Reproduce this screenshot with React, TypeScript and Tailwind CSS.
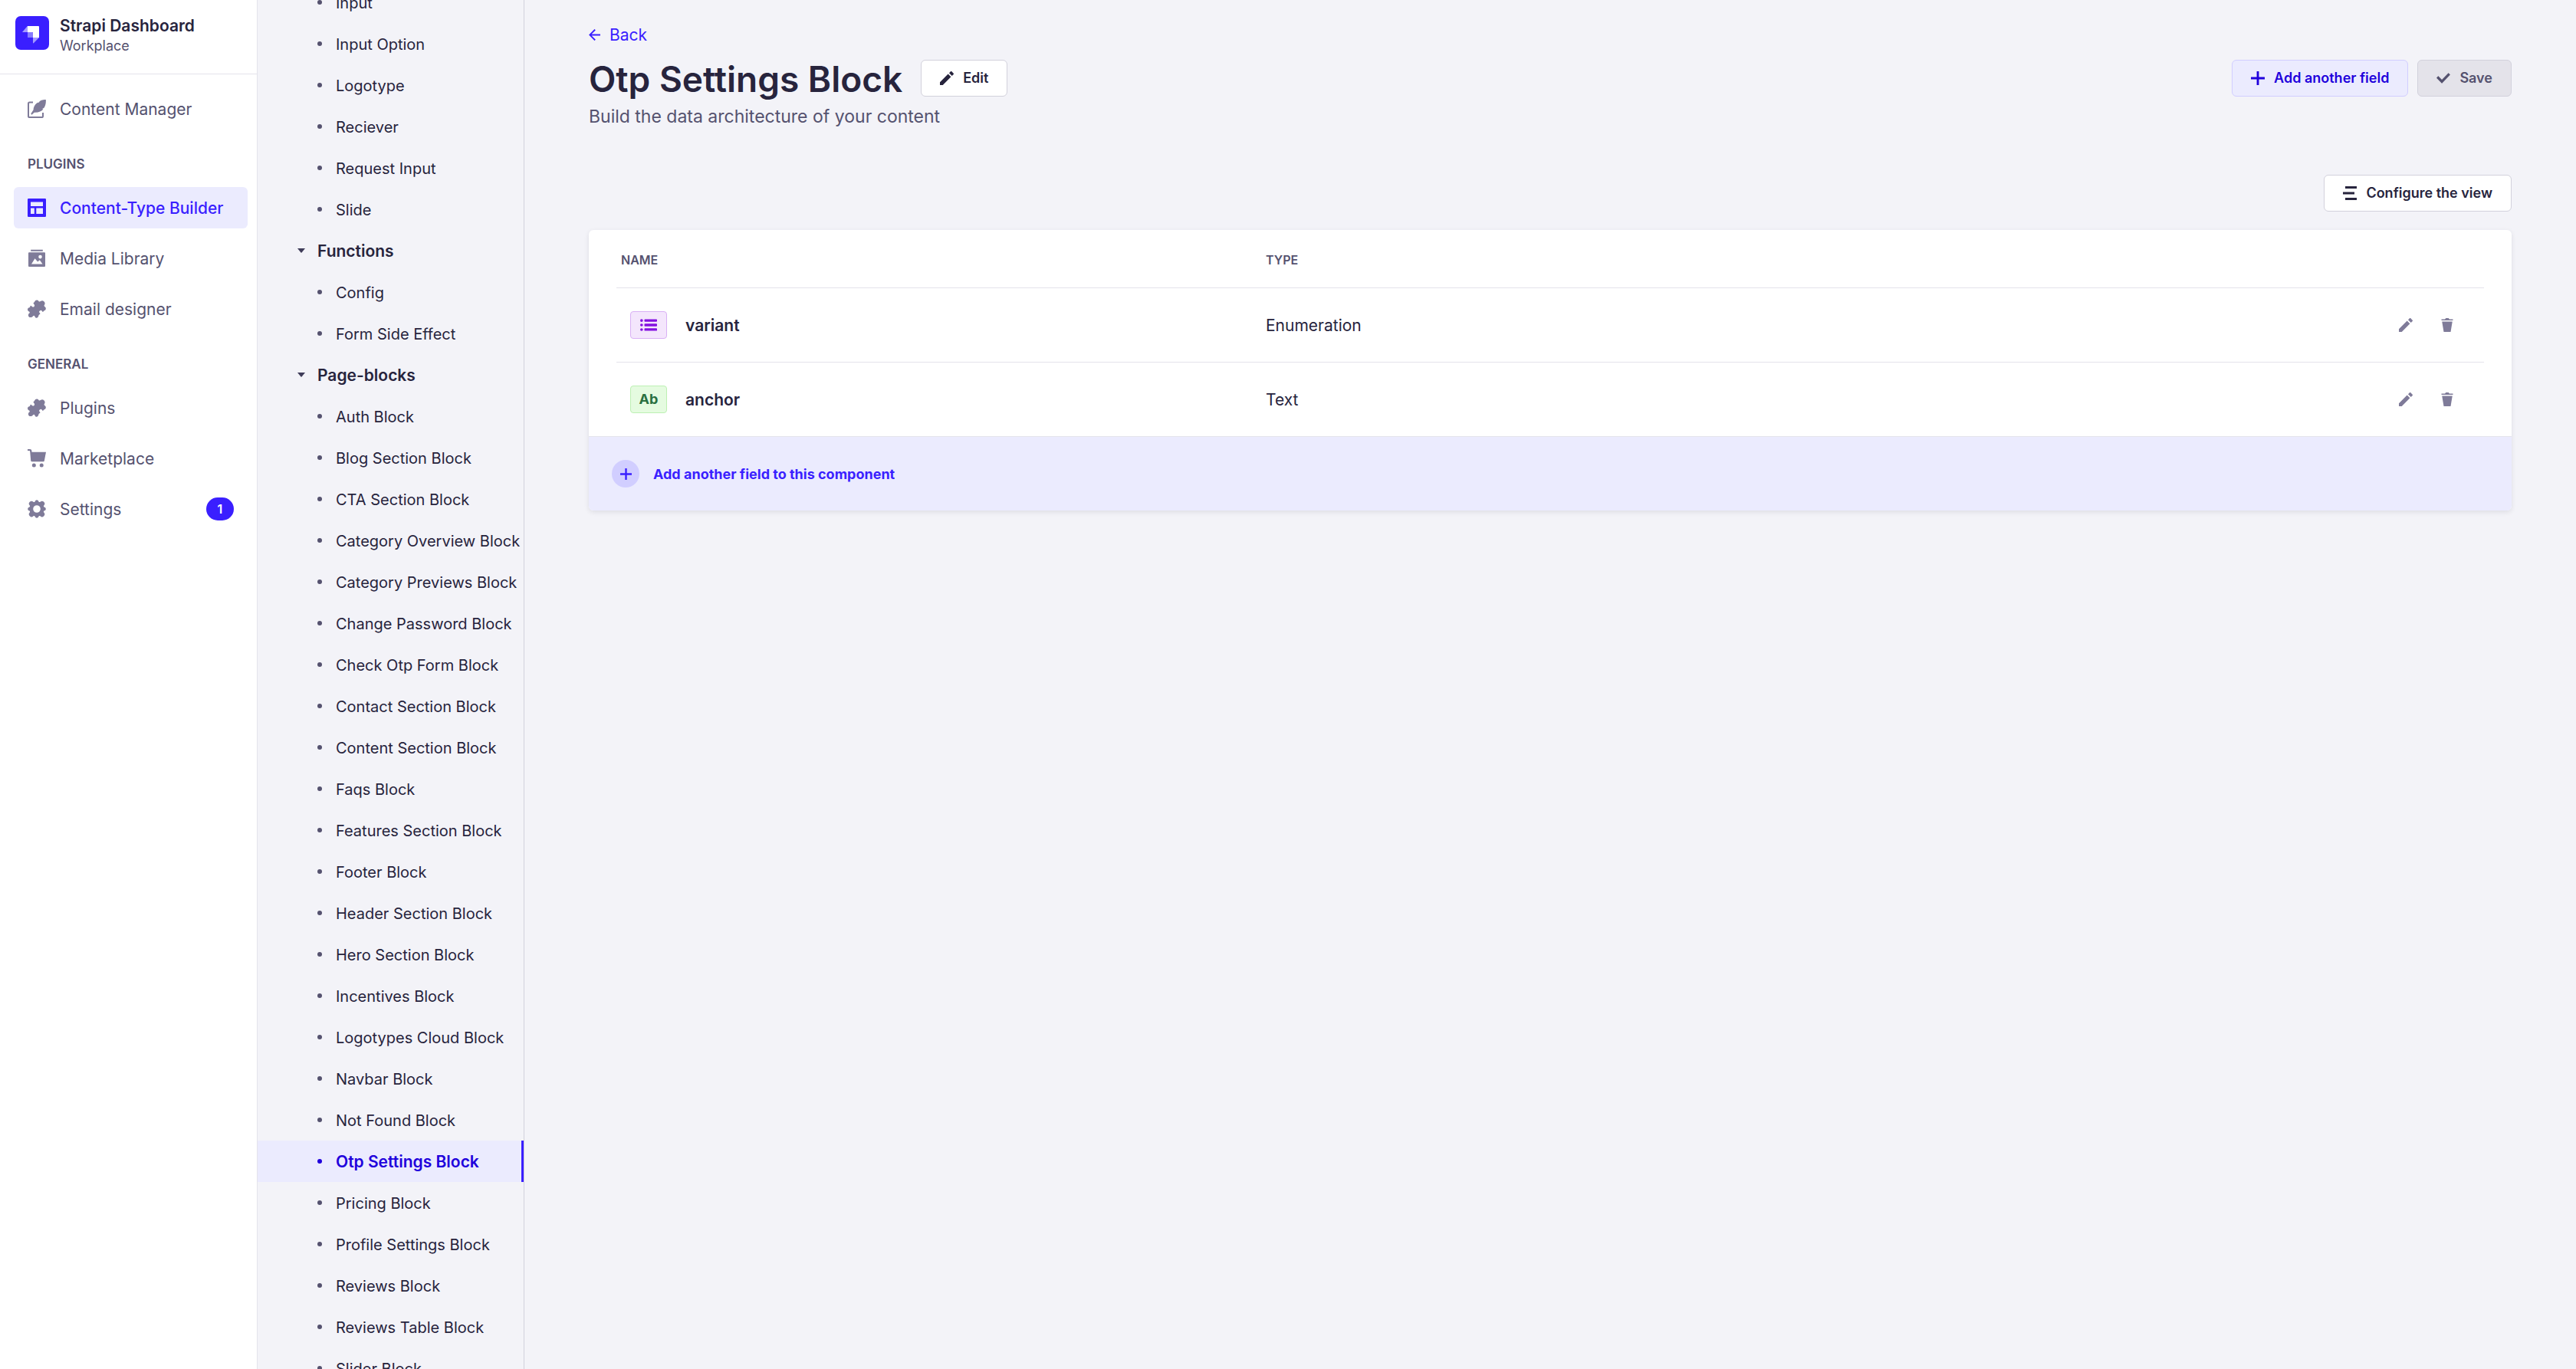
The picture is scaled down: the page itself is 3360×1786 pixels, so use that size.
import React from "react";

type IconProps = { className?: string };

const Svg = ({ className, children, box = "0 0 24 24" }: IconProps & { children: React.ReactNode; box?: string }) => (
  <svg viewBox={box} fill="currentColor" aria-hidden="true" className={className}>
    {children}
  </svg>
);

const Logo = () => (
  <Svg box="0 0 44 44" className="size-[44px] shrink-0">
    <rect width="44" height="44" rx="7" className="fill-[#3a1fff]" />
    <path d="M16 13h14a1 1 0 0 1 1 1v14h-8v-7h-7z" fill="#fff" />
    <path d="M16 13v8H9l6.500-7.700z" className="fill-[#a39aff]" />
    <path d="M16 21h6.500a.5.500 0 0 1 .5.500V28h-6.500a.5.500 0 0 1-.5-.5z" className="fill-[#877bff]" />
    <path d="M23 28h8l-7.200 7.200a.5.500 0 0 1-.8-.3z" className="fill-[#a39aff]" />
  </Svg>
);

const WriteIcon = ({ className }: IconProps) => (
  <Svg className={className}>
    <path d="M7 3.500H2.600A1.600 1.600 0 0 0 1 5.100v16.300A1.600 1.600 0 0 0 2.600 23h15.800a1.600 1.600 0 0 0 1.600-1.600V17" fill="none" stroke="currentColor" strokeWidth="2" />
    <path d="M23.800 0C19 0 16.500.8 14.800 3.500l-1 .6-.6-.4C10.500 5.300 7.600 9 7.600 13.300l-3.400 5.200 1.300 1.300 3.200-3.100c5.800.2 9.600-1.400 11.700-4.200l-1.300-.5 2.300-1.300C23.200 8 24.200 4.400 23.800 0z" />
  </Svg>
);

const LayoutIcon = ({ className }: IconProps) => (
  <Svg className={className}>
    <path fillRule="evenodd" d="M1.200 0h21.600A1.200 1.200 0 0 1 24 1.200v21.600a1.200 1.200 0 0 1-1.200 1.200H1.200A1.200 1.200 0 0 1 0 22.800V1.200A1.200 1.200 0 0 1 1.200 0zM4 4.500V10h16V4.500zM4 12.500V20h4.800v-7.500zm7.300 0V20H20v-7.500z" />
  </Svg>
);

const MediaIcon = ({ className }: IconProps) => (
  <Svg className={className}>
    <path fillRule="evenodd" d="M4.200.800h15.600v2H4.200zM2 4.300h20a1 1 0 0 1 1 1V22a1 1 0 0 1-1 1H2a1 1 0 0 1-1-1V5.300a1 1 0 0 1 1-1zm14.500 3.500a2.300 2.300 0 1 0 0 4.600 2.300 2.300 0 0 0 0-4.600zM5 19.500h14.500l-3.700-5.200-2.600 2.300-3.700-4.300z" />
  </Svg>
);

const PuzzleIcon = ({ className }: IconProps) => (
  <Svg className={className}>
    <path d="M9.300 2.300a2.900 2.900 0 0 1 5.200-.4c.5.900 1.600.8 2.400.2a3.500 3.500 0 0 1 5.100 4.600c-.7 1-.5 1.700.3 2.400a2.800 2.800 0 0 1-.6 5.200c-1 .3-1.200 1.600-1.800 1.600-.9 0-1.300-2.300-3-2-1.700.2-2.300 2-1.300 3.100.7.800 1 1 .7 1.600-.3.800-1.500.8-1.800 1.700-.5 2-1.300 3.500-2.800 3.500-1.600 0-1.900-1.400-2.500-2.400-.5-.8-1.500-.7-2.200.1-1.500 2-4.300 2-5.400.7-1.300-1.500-.7-3.700.7-4.700.8-.6.500-1.500-.3-1.900C-.500 14.700-.300 11.800.700 11c1-.8 2-.5 2.400-1.200.4-1 .1-2 1-2 .8 0 1.500 1.700 2.900 1.700 1.700 0 2.700-2 1.600-3.300C7.900 5.300 7.400 5 7.700 4.300c.2-.8 1.200-.8 1.600-2z" />
  </Svg>
);

const CartIcon = ({ className }: IconProps) => (
  <Svg className={className}>
    <path d="M0 0h3.200c1.200 0 2 .9 2.100 2l.2 1.700H24l-2.200 11.500A1.300 1.300 0 0 1 20.500 16.300H5.700a1.500 1.500 0 0 1-1.500-1.300L3.200 3.200C3.100 2.500 2.800 2 2.100 2H0z" />
    <circle cx="8.300" cy="21" r="2.500" />
    <circle cx="18.200" cy="21" r="2.500" />
  </Svg>
);

const CogIcon = ({ className }: IconProps) => (
  <Svg className={className}>
    <path fillRule="evenodd" d="M9.700 1.900a2.400 2.400 0 0 1 4.600 0c.4 1.300 1.200 1.500 2.200.9a2.900 2.900 0 0 1 4.700 4.700c-.6 1-.4 1.800.9 2.200a2.400 2.400 0 0 1 0 4.600c-1.300.4-1.500 1.200-.9 2.200a2.900 2.900 0 0 1-4.700 4.700c-1-.6-1.800-.4-2.200.9a2.400 2.400 0 0 1-4.600 0c-.4-1.300-1.200-1.500-2.200-.9a2.900 2.900 0 0 1-4.700-4.700c.6-1 .4-1.800-.9-2.200a2.400 2.400 0 0 1 0-4.600c1.300-.4 1.500-1.200.9-2.200a2.900 2.900 0 0 1 4.700-4.700c1 .6 1.800.4 2.200-.9zM12 7.200a4.800 4.800 0 1 0 0 9.600 4.800 4.800 0 0 0 0-9.600z" />
  </Svg>
);

const PencilIcon = ({ className }: IconProps) => (
  <Svg className={className}>
    <path d="M23.604 3.514c.528.528.528 1.360 0 1.887l-2.622 2.607-4.990-4.990L18.600.396a1.322 1.322 0 0 1 1.887 0l3.118 3.118ZM0 24v-4.990l14.200-14.200 4.990 4.990L4.990 24H0Z" />
  </Svg>
);

const TrashIcon = ({ className }: IconProps) => (
  <Svg className={className}>
    <path d="M3.236 6.149a.2.200 0 0 0-.197.233L6 24h12l2.960-17.618a.2.200 0 0 0-.196-.233H3.236ZM21.800 1.983c.11 0 .2.090.2.200v1.584a.2.200 0 0 1-.2.200H2.200a.2.200 0 0 1-.2-.2V2.183c0-.11.090-.2.200-.2h5.511c.9 0 1.631-1.090 1.631-1.983h5.316c0 .894.730 1.983 1.631 1.983H21.800Z" />
  </Svg>
);

const PlusIcon = ({ className }: IconProps) => (
  <Svg className={className}>
    <path d="M24 13.604a.3.300 0 0 1-.3.300h-9.795V23.700a.3.300 0 0 1-.3.300h-3.210a.3.300 0 0 1-.3-.3v-9.795H.300a.3.300 0 0 1-.3-.3v-3.210a.3.300 0 0 1 .3-.3h9.795V.300a.3.300 0 0 1 .3-.3h3.210a.3.300 0 0 1 .3.300v9.795H23.700a.3.300 0 0 1 .3.300v3.210Z" />
  </Svg>
);

const CheckIcon = ({ className }: IconProps) => (
  <Svg className={className}>
    <path d="M20.727 2.970a.2.200 0 0 1 .286 0l2.850 2.890a.2.200 0 0 1 0 .28L9.554 20.854a.2.200 0 0 1-.285 0l-9.130-9.243a.2.200 0 0 1 0-.281l2.850-2.892a.2.200 0 0 1 .284 0l6.140 6.209L20.726 2.970Z" />
  </Svg>
);

const BackIcon = ({ className }: IconProps) => (
  <Svg className={className}>
    <path d="M24 13.300a.2.200 0 0 1-.2.200H5.740l8.239 8.239a.2.200 0 0 1 0 .282L12.140 23.860a.2.200 0 0 1-.282 0L.140 12.140a.2.200 0 0 1 0-.282L11.860.140a.2.200 0 0 1 .282 0L13.980 1.980a.2.200 0 0 1 0 .282L5.740 10.500H23.800c.11 0 .2.090.2.200v2.600Z" />
  </Svg>
);

const ViewIcon = ({ className }: IconProps) => (
  <Svg className={className}>
    <path d="M4 0h20v4H4zM0 10h20v4H0zM4 20h20v4H4z" />
  </Svg>
);

const ListIcon = ({ className }: IconProps) => (
  <Svg className={className}>
    <path d="M7 3.700h16a1 1 0 0 1 1 1v1.600a1 1 0 0 1-1 1H7a1 1 0 0 1-1-1V4.700a1 1 0 0 1 1-1zM7 10.200h16a1 1 0 0 1 1 1v1.600a1 1 0 0 1-1 1H7a1 1 0 0 1-1-1v-1.600a1 1 0 0 1 1-1zM7 16.700h16a1 1 0 0 1 1 1v1.600a1 1 0 0 1-1 1H7a1 1 0 0 1-1-1v-1.600a1 1 0 0 1 1-1z" />
    <circle cx="2" cy="5.500" r="2" />
    <circle cx="2" cy="12" r="2" />
    <circle cx="2" cy="18.500" r="2" />
  </Svg>
);

type NavItem = { label: string; icon: React.ComponentType<IconProps>; active?: boolean; badge?: string };

const plugins: NavItem[] = [
  { label: "Content-Type Builder", icon: LayoutIcon, active: true },
  { label: "Media Library", icon: MediaIcon },
  { label: "Email designer", icon: PuzzleIcon },
];

const general: NavItem[] = [
  { label: "Plugins", icon: PuzzleIcon },
  { label: "Marketplace", icon: CartIcon },
  { label: "Settings", icon: CogIcon, badge: "1" },
];

const NavLink = ({ label, icon: Icon, active, badge }: NavItem) => (
  <li>
    <a
      href="#"
      aria-current={active ? "page" : undefined}
      className={
        active
          ? "flex h-[54px] items-center rounded-md bg-[#ebebfe] px-[18px] font-medium text-[#3a1fff]"
          : "flex h-[54px] items-center rounded-md px-[18px] text-[#55526f]"
      }
    >
      <Icon className={active ? "size-6 shrink-0" : "size-6 shrink-0 text-[#7f7b99]"} />
      <span className="ml-[18px] grow pt-0.5 whitespace-nowrap">{label}</span>
      {badge && (
        <span className="flex h-[30px] w-9 items-center justify-center rounded-full bg-[#3a1fff] text-base font-semibold text-white">
          {badge}
        </span>
      )}
    </a>
  </li>
);

const NavSection = ({ title, items }: { title: string; items: NavItem[] }) => (
  <section className="mt-[33px]">
    <h2 className="flex h-6 items-center px-[18px] text-[17px] font-semibold uppercase text-[#55526f]">{title}</h2>
    <ul className="mt-[18px] flex flex-col gap-3">
      {items.map((item) => (
        <NavLink key={item.label} {...item} />
      ))}
    </ul>
  </section>
);

const MainNav = () => (
  <nav aria-label="Main" className="w-[336px] shrink-0 border-r border-[#e4e3eb] bg-white">
    <div className="flex h-[97px] items-start border-b border-[#e4e3eb] px-5 pt-[21px]">
      <Logo />
      <div className="ml-[14px]">
        <p className="text-[21px] leading-[26px] font-semibold text-[#27243d]">Strapi Dashboard</p>
        <p className="text-lg leading-[26px] text-[#55526f]">Workplace</p>
      </div>
    </div>
    <div className="pt-[18px] pr-3 pl-[18px]">
      <ul>
        <NavLink label="Content Manager" icon={WriteIcon} />
      </ul>
      <NavSection title="Plugins" items={plugins} />
      <NavSection title="General" items={general} />
    </div>
  </nav>
);

const groups = [
  { title: "Elements", items: ["Input", "Input Option", "Logotype", "Reciever", "Request Input", "Slide"] },
  { title: "Functions", items: ["Config", "Form Side Effect"] },
  {
    title: "Page-blocks",
    items: [
      "Auth Block",
      "Blog Section Block",
      "CTA Section Block",
      "Category Overview Block",
      "Category Previews Block",
      "Change Password Block",
      "Check Otp Form Block",
      "Contact Section Block",
      "Content Section Block",
      "Faqs Block",
      "Features Section Block",
      "Footer Block",
      "Header Section Block",
      "Hero Section Block",
      "Incentives Block",
      "Logotypes Cloud Block",
      "Navbar Block",
      "Not Found Block",
      "Otp Settings Block",
      "Pricing Block",
      "Profile Settings Block",
      "Reviews Block",
      "Reviews Table Block",
      "Slider Block",
    ],
  },
];

const SubNav = () => (
  <nav aria-label="Components" className="flex h-screen w-[348px] shrink-0 flex-col overflow-hidden border-r border-[#d2d1dc]">
    <div className="-mt-[78px]">
      {groups.map((group) => (
        <section key={group.title}>
          <button type="button" className="flex h-[54px] w-full items-center pl-[52px] font-semibold text-[#27243d]">
            <svg viewBox="0 0 10 6" aria-hidden="true" className="h-[6px] w-[10px] fill-[#3f3c59]">
              <path d="M0 0h10L5.500 5.600a.7.700 0 0 1-1 0z" />
            </svg>
            <span className="ml-4 pt-0.5">{group.title}</span>
          </button>
          <ul>
            {group.items.map((item) => {
              const active = item === "Otp Settings Block";
              return (
                <li key={item}>
                  <a
                    href="#"
                    aria-current={active ? "page" : undefined}
                    className={
                      active
                        ? "flex h-[54px] items-center border-r-3 border-[#3a1fff] bg-[#ebebfe] pl-[78px] font-semibold text-[#2000dc]"
                        : "flex h-[54px] items-center pl-[78px] text-xl leading-[30px] text-[#27243d]"
                    }
                  >
                    <span
                      className={
                        active
                          ? "size-[6px] shrink-0 rounded-full bg-[#2000dc]"
                          : "size-[6px] shrink-0 rounded-full bg-[#55526f]"
                      }
                    />
                    <span className="ml-[18px] pt-0.5 whitespace-nowrap">{item}</span>
                  </a>
                </li>
              );
            })}
          </ul>
        </section>
      ))}
    </div>
  </nav>
);

const fields = [
  { name: "variant", type: "Enumeration" },
  { name: "anchor", type: "Text" },
];

const FieldBadge = ({ type }: { type: string }) =>
  type === "Text" ? (
    <span className="flex h-9 w-12 items-center justify-center rounded border border-[#bdf0b3] bg-[#e5fbe0] text-lg font-bold text-[#2a7040]">
      Ab
    </span>
  ) : (
    <span className="flex h-9 w-12 items-center justify-center rounded border border-[#d9b0f5] bg-[#f4e6fc] text-[#8410e0]">
      <ListIcon className="size-[22px]" />
    </span>
  );

const FieldsCard = () => (
  <div className="mt-6 overflow-hidden rounded-md bg-white shadow-[0_2px_6px_rgba(33,33,52,0.1)]">
    <div className="px-9">
      <table className="w-full table-fixed border-separate border-spacing-0 text-left text-[#27243d]">
        <thead>
          <tr className="text-base text-[#55526f] uppercase">
            <th scope="col" className="h-[76px] w-[829px] border-b border-[#e4e3eb] pt-0.5 pl-[6px] font-semibold">
              Name
            </th>
            <th scope="col" className="border-b border-[#e4e3eb] pt-0.5 pl-[18px] font-semibold">
              Type
            </th>
            <th scope="col" className="w-[180px] border-b border-[#e4e3eb]">
              <span className="sr-only">Actions</span>
            </th>
          </tr>
        </thead>
        <tbody>
          {fields.map((field) => (
            <tr key={field.name} className="group">
              <td className="h-[97px] border-b border-[#e4e3eb] pl-[18px] group-last:h-24 group-last:border-0">
                <div className="flex items-center gap-6">
                  <FieldBadge type={field.type} />
                  <span className="pt-0.5 font-semibold">{field.name}</span>
                </div>
              </td>
              <td className="border-b border-[#e4e3eb] pt-0.5 pl-[18px] group-last:border-0">{field.type}</td>
              <td className="border-b border-[#e4e3eb] group-last:border-0">
                <div className="flex justify-end gap-[18px] pr-[30px] text-[#7f7b99]">
                  <button type="button" aria-label={`Edit ${field.name}`} className="flex size-9 items-center justify-center">
                    <PencilIcon className="size-[18px]" />
                  </button>
                  <button type="button" aria-label={`Delete ${field.name}`} className="flex size-9 items-center justify-center">
                    <TrashIcon className="size-[18px]" />
                  </button>
                </div>
              </td>
            </tr>
          ))}
        </tbody>
      </table>
    </div>
    <button
      type="button"
      className="flex h-[97px] w-full items-center border-t border-[#e4e3eb] bg-[#ebebfe] pl-[30px] text-lg font-bold text-[#3a1fff]"
    >
      <span className="flex size-9 items-center justify-center rounded-full bg-[#d1ceff]">
        <PlusIcon className="size-[15px]" />
      </span>
      <span className="ml-[18px] pt-0.5">Add another field to this component</span>
    </button>
  </div>
);

const Main = () => (
  <main className="min-w-0 grow px-[84px] pt-[30px]">
    <a href="#" className="flex h-[30px] w-fit items-center gap-3 text-[#3a1fff]">
      <BackIcon className="size-[15px]" />
      <span className="pt-0.5">Back</span>
    </a>
    <header className="mt-[12px]">
      <div className="flex h-[60px] items-center">
        <h1 className="pt-0.5 text-[46px] leading-[60px] font-semibold text-[#27243d]">Otp Settings Block</h1>
        <button
          type="button"
          className="ml-6 flex h-12 items-center gap-3 rounded-md border border-[#d2d1dc] bg-white px-6 text-lg font-semibold text-[#27243d]"
        >
          <PencilIcon className="size-[18px]" />
          Edit
        </button>
        <div className="ml-auto flex gap-3">
          <button
            type="button"
            className="flex h-12 items-center gap-3 rounded-md border border-[#d1ceff] bg-[#ebebfe] px-6 text-lg font-semibold text-[#2000dc]"
          >
            <PlusIcon className="size-[18px]" />
            Add another field
          </button>
          <button
            type="button"
            disabled
            className="flex h-12 items-center gap-3 rounded-md border border-[#d2d1dc] bg-[#e4e3ea] px-6 text-lg font-semibold text-[#55526f]"
          >
            <CheckIcon className="size-[18px]" />
            Save
          </button>
        </div>
      </div>
      <p className="pt-0.5 text-[23px] leading-9 text-[#55526f]">Build the data architecture of your content</p>
    </header>
    <div className="mt-[58px] flex justify-end">
      <button
        type="button"
        className="flex h-12 items-center gap-3 rounded-md border border-[#d2d1dc] bg-white px-6 text-lg font-semibold text-[#27243d]"
      >
        <ViewIcon className="size-[18px]" />
        Configure the view
      </button>
    </div>
    <FieldsCard />
  </main>
);

export default function App() {
  return (
    <div className="flex h-screen overflow-hidden bg-[#f3f3f8] font-['Inter',sans-serif] text-[21px] leading-[30px]">
      <MainNav />
      <SubNav />
      <Main />
    </div>
  );
}
